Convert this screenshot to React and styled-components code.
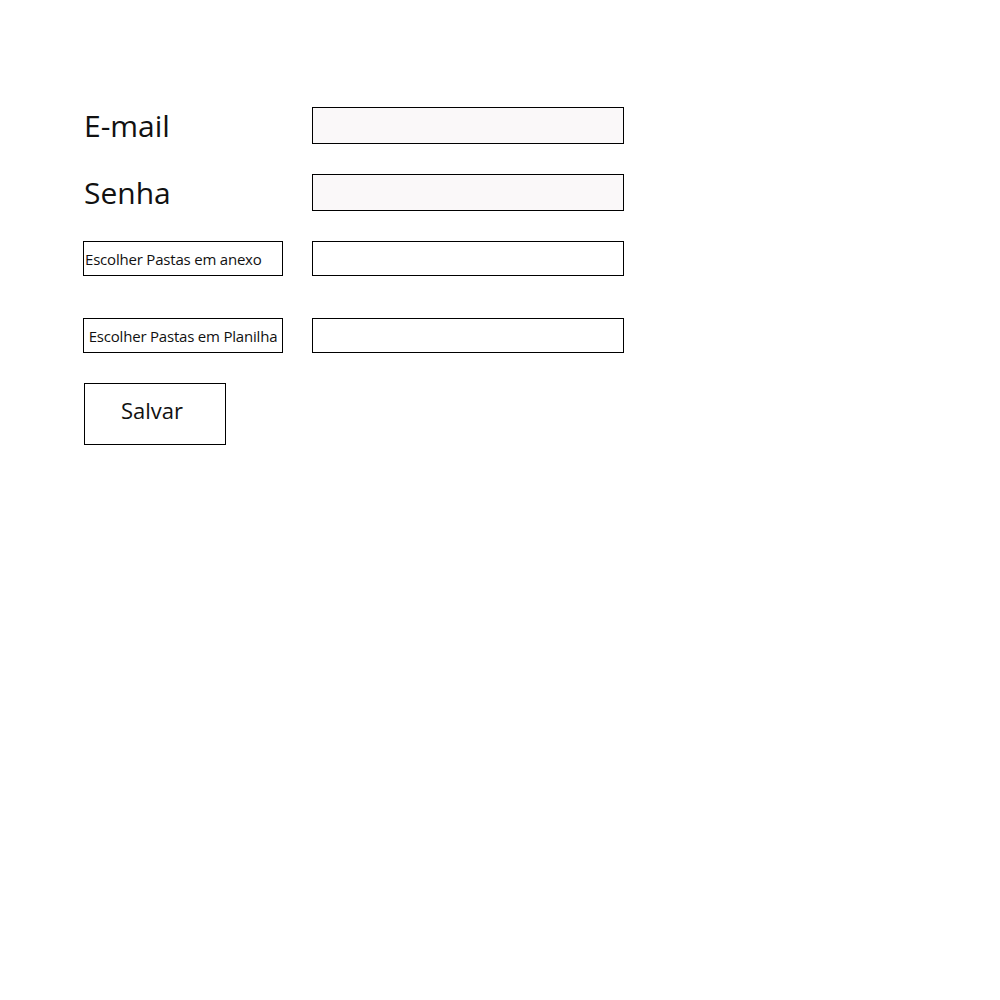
import React from 'react';
import styled, { createGlobalStyle } from 'styled-components';

const GlobalStyle = createGlobalStyle`
  body {
    margin: 0;
    background: #fff;
    font-family: "Open Sans", "Noto Sans", sans-serif;
    color: #111;
  }
`;

const Form = styled.form`
  display: grid;
  grid-template-columns: 228px 312px;
  align-items: center;
  padding: 107px 0 0 84px;
`;

const Row = styled.div`
  display: contents;
`;

const Label = styled.label`
  font-size: 30px;
  letter-spacing: 0;
  line-height: 37px;
  margin-top: ${p => p.top || 0}px;
`;

const Field = styled.input`
  box-sizing: border-box;
  width: 312px;
  height: ${p => p.h || 37}px;
  margin-top: ${p => p.top || 0}px;
  border: 1px solid #000;
  background: ${p => (p.filled ? '#faf8f9' : '#fff')};
  outline: none;
  padding: 0 6px;
`;

const PickButton = styled.button`
  box-sizing: border-box;
  width: 200px;
  height: 35px;
  margin-top: ${p => p.top || 0}px;
  margin-left: -1px;
  border: 1px solid #000;
  background: #fff;
  font-family: "Open Sans", "Noto Sans", sans-serif;
  font-size: 15px;
  letter-spacing: -0.2px;
  color: #111;
  text-align: ${p => p.align || 'left'};
  padding: 0 1px;
  white-space: nowrap;
`;

const SaveButton = styled.button`
  box-sizing: border-box;
  width: 142px;
  height: 62px;
  margin-top: 30px;
  border: 1px solid #000;
  background: #fff;
  font-family: "Open Sans", "Noto Sans", sans-serif;
  font-size: 22px;
  color: #111;
  padding: 0 6px 8px 0;
`;

export default function App() {
  return (
    <>
      <GlobalStyle />
      <Form onSubmit={e => e.preventDefault()}>
        <Row>
          <Label>E-mail</Label>
          <Field type="email" filled />
        </Row>
        <Row>
          <Label top={30}>Senha</Label>
          <Field type="password" filled top={30} />
        </Row>
        <Row>
          <PickButton type="button" top={30}>Escolher Pastas em anexo</PickButton>
          <Field type="text" h={35} top={30} />
        </Row>
        <Row>
          <PickButton type="button" top={42} align="center">Escolher Pastas em Planilha</PickButton>
          <Field type="text" h={35} top={42} />
        </Row>
        <Row>
          <SaveButton type="submit">Salvar</SaveButton>
        </Row>
      </Form>
    </>
  );
}
